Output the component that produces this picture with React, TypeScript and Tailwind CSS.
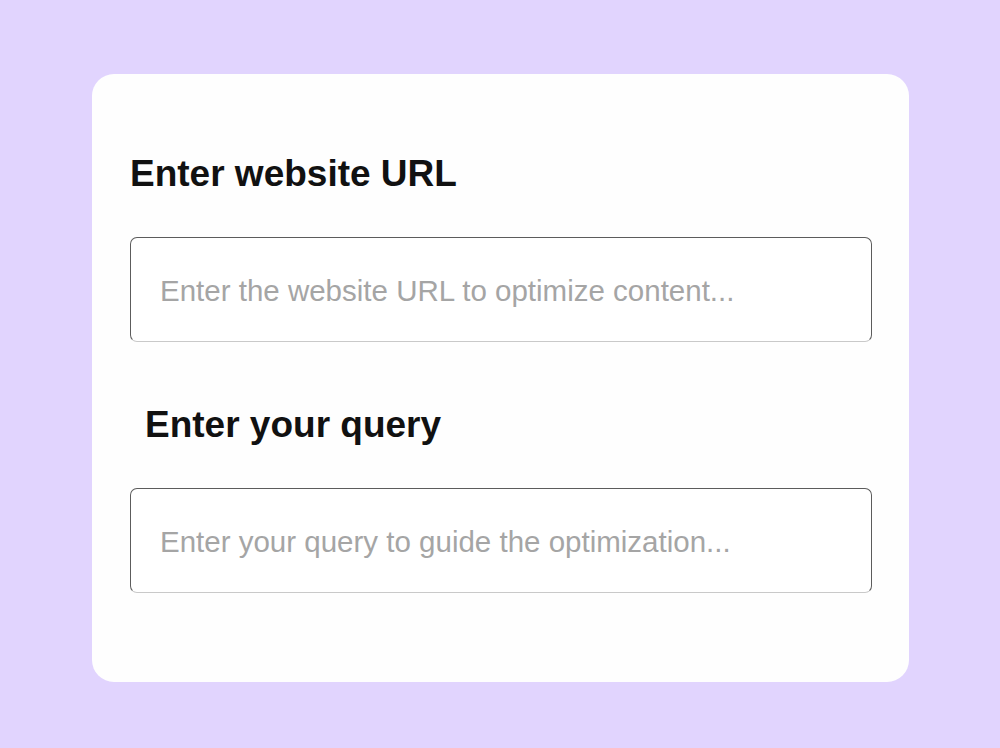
import * as React from 'react';

const Field: React.FC<{ placeholder: string }> = ({ placeholder }) => (
  <input
    type="text"
    placeholder={placeholder}
    className="mt-[45px] block h-[105px] w-full rounded-[7px] border border-[#5c5c5c] border-b-[#c9c9c9] bg-white px-[29px] pt-[2px] text-[29.5px] text-[#222] outline-none placeholder:text-[#a5a5a5]"
  />
);

export default function App() {
  return (
    <div
      className="h-[748px] w-full bg-[#e1d4fe] pl-[92px] pt-[74px]"
      style={{ fontFamily: '"Liberation Sans", Arial, sans-serif' }}
    >
      <div className="h-[608px] w-[817px] rounded-[22px] bg-[#fefefe] pl-[38px] pr-[37px] pt-[81px]">
        {/* URL */}
        <h2 className="text-[37px] font-bold leading-none text-[#111]">Enter website URL</h2>
        <Field placeholder="Enter the website URL to optimize content..." />

        {/* Query */}
        <h2 className="mt-[64px] pl-[15px] text-[37px] font-bold leading-none text-[#111]">Enter your query</h2>
        <Field placeholder="Enter your query to guide the optimization..." />
      </div>
    </div>
  );
}
